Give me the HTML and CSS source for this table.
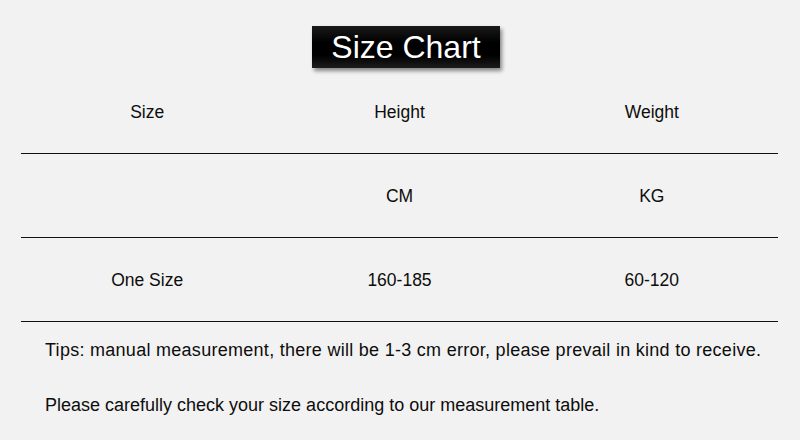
FILE: index.html
```html
<!DOCTYPE html>
<html>
<head>
<meta charset="utf-8">
<link rel="stylesheet" href="styles.css">
</head>
<body>
<div class="page">
  <div class="title-wrap"><div class="title">Size Chart</div></div>
  <div class="table">
    <div class="row"><div class="cell">Size</div><div class="cell">Height</div><div class="cell">Weight</div></div>
    <div class="row"><div class="cell"></div><div class="cell">CM</div><div class="cell">KG</div></div>
    <div class="row"><div class="cell">One Size</div><div class="cell">160-185</div><div class="cell">60-120</div></div>
  </div>
  <div class="tips">
    <p class="tip-wide">Tips: manual measurement, there will be 1-3 cm error, please prevail in kind to receive.</p>
    <p>Please carefully check your size according to our measurement table.</p>
  </div>
</div>
</body>
</html>
```
FILE: styles.css
```css
html, body { margin: 0; padding: 0; }
body {
  background: #f2f2f2;
  font-family: "Liberation Sans", Arial, sans-serif;
  color: #0d0d0d;
  width: 800px;
  height: 440px;
  overflow: hidden;
}
.page { display: flex; flex-direction: column; }
.title-wrap { display: flex; justify-content: center; padding-top: 26px; padding-left: 12px; }
.title {
  height: 42px;
  width: 188px;
  box-sizing: border-box;
  display: flex;
  align-items: center;
  justify-content: center;
  background: linear-gradient(#1a1a1a, #000 40%, #000 70%, #1c1c1c);
  color: #fff;
  font-size: 32px;
  box-shadow: 2px 3px 4px rgba(0,0,0,0.45);
  padding-top: 1px;
}
.table { margin: 2px 22px 0 21px; }
.row {
  display: grid;
  grid-template-columns: 1fr 1fr 1fr;
  height: 83px;
  border-bottom: 1px solid #111;
}
.cell { display: flex; align-items: center; justify-content: center; font-size: 17.5px; padding-top: 2px; }
.tips { padding-left: 45px; }
.tips p { margin: 0; font-size: 18px; line-height: 20px; }
.tips p:first-child { margin-top: 18px; }
.tips p:last-child { margin-top: 35px; }
.tips .tip-wide { letter-spacing: 0.28px; }
```
